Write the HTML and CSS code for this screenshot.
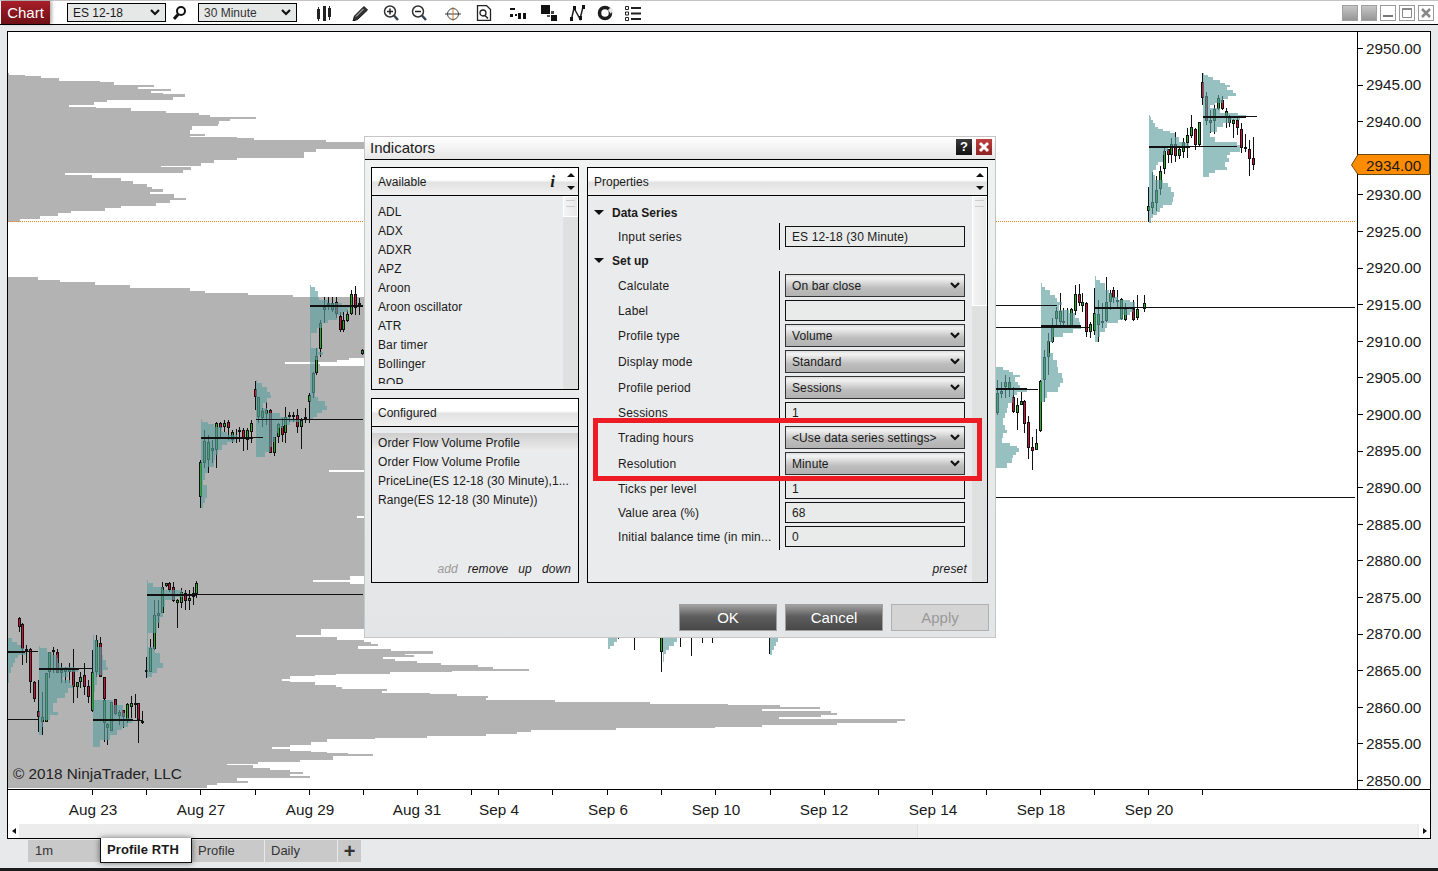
FILE: index.html
```html
<!DOCTYPE html>
<html lang="en">
<head>
  <meta charset="UTF-8" />
  <title>Chart - ES 12-18</title>
  <link rel="stylesheet" href="styles.css">
</head>
<body>
  <div class="window">

    <div class="toolbar">
      <div class="chart-btn">Chart</div>
      <div class="tool-select sel-instrument">ES 12-18 <svg class="chev" viewBox="0 0 10 7"><path d="M1 1l4 4 4-4"/></svg></div>
      <svg class="tool gap7" viewBox="0 0 16 16"><circle cx="8" cy="6" r="4" fill="none" stroke="#111" stroke-width="2"/><path d="M5 9.500L1 14" stroke="#111" stroke-width="3"/></svg>
      <div class="tool-select sel-period">30 Minute <svg class="chev" viewBox="0 0 10 7"><path d="M1 1l4 4 4-4"/></svg></div>
      <svg class="tool gap19" viewBox="0 0 16 16"><path d="M1 4h3v10H1zM7 1h3v15H7zM12 3h3v9h-3z" fill="#222"/><path d="M2.500 2v14M13.500 1v14" stroke="#222"/></svg>
      <svg class="tool gap20" viewBox="0 0 16 16"><path d="M1 16l1.500-5L12 1.500l3.500 3.500L5.500 14.500z" fill="#333" stroke="#111"/><path d="M4 11.500l7.500-7.500" stroke="#ddd"/></svg>
      <svg class="tool gap15" viewBox="0 0 16 16"><circle cx="7" cy="6.500" r="5.500" fill="#fff" stroke="#333" stroke-width="1.500"/><path d="M4 6.500h6M7 3.500v6" stroke="#222" stroke-width="1.500"/><path d="M11 10.500l4 4.500" stroke="#345" stroke-width="2.500"/></svg>
      <svg class="tool gap12" viewBox="0 0 16 16"><circle cx="7" cy="6.500" r="5.500" fill="#fff" stroke="#333" stroke-width="1.500"/><path d="M4 6.500h6" stroke="#222" stroke-width="1.500"/><path d="M11 10.500l4 4.500" stroke="#345" stroke-width="2.500"/></svg>
      <svg class="tool gap18" viewBox="0 0 16 16"><circle cx="8" cy="9" r="5.500" fill="none" stroke="#444"/><path d="M0 9h16" stroke="#333"/><path d="M8 2v14" stroke="#c97f2a"/></svg>
      <svg class="tool gap15" viewBox="0 0 16 16"><path d="M1.500.5h9l4 4v11h-13z" fill="#fff" stroke="#222" stroke-width="1.300"/><circle cx="7" cy="8" r="3" fill="none" stroke="#222" stroke-width="1.300"/><path d="M9 10.500l3 3" stroke="#222" stroke-width="1.500"/></svg>
      <svg class="tool gap18" viewBox="0 0 16 16"><path d="M0 3h5v2H0zM0 9h3v3H0zM8 8h3v6H8zM13 8h3v6h-3zM5 9h2v2H5z" fill="#111"/></svg>
      <svg class="tool gap15" viewBox="0 0 16 16"><path d="M0 0h9v9H0z" fill="#111"/><path d="M10 6h3v3h-3z" fill="#444"/><path d="M10 10h6v6h-6z" fill="#111"/><path d="M6 10h3v2H6z" fill="#555"/></svg>
      <svg class="tool gap12" viewBox="0 0 16 16"><path d="M2.500 14L5 3l6 11L14 2" fill="none" stroke="#222" stroke-width="1.500"/><path d="M1 12h3v4H1zM4 1h3v4H4zM10 11h3v4h-3zM13 0h3v4h-3z" fill="#111"/></svg>
      <svg class="tool gap12" viewBox="0 0 16 16"><circle cx="8" cy="8" r="5.500" fill="none" stroke="#1c1c1c" stroke-width="3.500"/><path d="M13 3l3 1-2 5-3-4z" fill="#e8e9ea"/></svg>
      <svg class="tool gap12" viewBox="0 0 16 16"><path d="M.5 1.500h3v3h-3zM.5 7h3v3h-3zM.5 12.500h3v3h-3z" fill="none" stroke="#222"/><path d="M6 2h10v2H6zM6 7.500h10v2H6zM6 13h10v2H6z" fill="#222"/></svg>
      <div class="win-btns">
        <div class="win-btn solid"></div>
        <div class="win-btn solid"></div>
        <div class="win-btn"><svg viewBox="0 0 14 14"><path d="M2 10h10" stroke="#777" stroke-width="2"/></svg></div>
        <div class="win-btn"><svg viewBox="0 0 14 14"><path d="M2.500 3.500h9v8h-9z" fill="none" stroke="#888"/><path d="M2 3h10" stroke="#888" stroke-width="2"/></svg></div>
        <div class="win-btn"><svg viewBox="0 0 14 14"><path d="M3 3l8 8M11 3l-8 8" stroke="#888" stroke-width="2.500"/></svg></div>
      </div>
    </div>

    <div class="chart-frame">
      <svg id="chart" class="chart-svg" viewBox="8 32 1422 792" width="1422" height="792"></svg>
      <div class="hscroll">
        <div class="hscroll-btn"><span class="tri-left"></span></div>
        <div class="hscroll-track"><div class="hscroll-thumb"></div></div>
        <div class="hscroll-btn"><span class="tri-right"></span></div>
      </div>
    </div>

    <div class="tabs">
      <div class="tab tab-1m">1m</div>
      <div class="tab tab-active">Profile RTH</div>
      <div class="tab tab-wide">Profile</div>
      <div class="tab tab-wide">Daily</div>
      <div class="tab tab-add">+</div>
    </div>
  </div>

  <div class="dialog">
    <div class="dialog-title">
      <span>Indicators</span>
      <div class="dialog-btns">
        <div class="help-btn">?</div>
        <div class="close-btn"><svg viewBox="0 0 12 12"><path d="M2 2l8 8M10 2l-8 8" stroke="#fff" stroke-width="3"/></svg></div>
      </div>
    </div>

    <div class="dialog-body">
      <div class="left-col">
        <div class="panel panel-available">
          <div class="panel-head">
            <span class="panel-title">Available</span>
            <span class="info-i">i</span>
            <div class="head-arrows"><span class="tri-up"></span><span class="tri-down"></span></div>
          </div>
          <div class="panel-body">
            <div class="list list-available">
              <div class="row">ADL</div>
              <div class="row">ADX</div>
              <div class="row">ADXR</div>
              <div class="row">APZ</div>
              <div class="row">Aroon</div>
              <div class="row">Aroon oscillator</div>
              <div class="row">ATR</div>
              <div class="row">Bar timer</div>
              <div class="row">Bollinger</div>
              <div class="row">BOP</div>
            </div>
            <div class="vscroll"><div class="thumb thumb-small"></div></div>
          </div>
        </div>

        <div class="panel panel-configured">
          <div class="panel-head">
            <span class="panel-title">Configured</span>
          </div>
          <div class="list list-configured">
            <div class="row selected">Order Flow Volume Profile</div>
            <div class="row">Order Flow Volume Profile</div>
            <div class="row">PriceLine(ES 12-18 (30 Minute),1...</div>
            <div class="row">Range(ES 12-18 (30 Minute))</div>
          </div>
          <div class="links">
            <span class="off">add</span><span>remove</span><span>up</span><span>down</span>
          </div>
        </div>
      </div>

      <div class="panel panel-props">
        <div class="panel-head">
          <span class="panel-title">Properties</span>
          <div class="head-arrows"><span class="tri-up"></span><span class="tri-down"></span></div>
        </div>
        <div class="panel-body">
          <div class="props">
            <div class="section"><span class="tri-section"></span>Data Series</div>
            <div class="prop-group group-series">
              <div class="prop"><div class="prop-label">Input series</div><div class="prop-value"><div class="field input">ES 12-18 (30 Minute)</div></div></div>
            </div>
            <div class="section"><span class="tri-section"></span>Set up</div>
            <div class="prop-group">
              <div class="prop"><div class="prop-label">Calculate</div><div class="prop-value"><div class="field select">On bar close<svg class="chev" viewBox="0 0 10 7"><path d="M1 1l4 4 4-4"/></svg></div></div></div>
              <div class="prop"><div class="prop-label">Label</div><div class="prop-value"><div class="field input"></div></div></div>
              <div class="prop"><div class="prop-label">Profile type</div><div class="prop-value"><div class="field select">Volume<svg class="chev" viewBox="0 0 10 7"><path d="M1 1l4 4 4-4"/></svg></div></div></div>
              <div class="prop"><div class="prop-label">Display mode</div><div class="prop-value"><div class="field select">Standard<svg class="chev" viewBox="0 0 10 7"><path d="M1 1l4 4 4-4"/></svg></div></div></div>
              <div class="prop"><div class="prop-label">Profile period</div><div class="prop-value"><div class="field select">Sessions<svg class="chev" viewBox="0 0 10 7"><path d="M1 1l4 4 4-4"/></svg></div></div></div>
              <div class="prop"><div class="prop-label">Sessions</div><div class="prop-value"><div class="field input">1</div></div></div>
              <div class="prop"><div class="prop-label">Trading hours</div><div class="prop-value"><div class="field select">&lt;Use data series settings&gt;<svg class="chev" viewBox="0 0 10 7"><path d="M1 1l4 4 4-4"/></svg></div></div></div>
              <div class="prop"><div class="prop-label">Resolution</div><div class="prop-value"><div class="field select">Minute<svg class="chev" viewBox="0 0 10 7"><path d="M1 1l4 4 4-4"/></svg></div></div></div>
              <div class="prop"><div class="prop-label">Ticks per level</div><div class="prop-value"><div class="field input">1</div></div></div>
              <div class="prop"><div class="prop-label">Value area (%)</div><div class="prop-value"><div class="field input">68</div></div></div>
              <div class="prop"><div class="prop-label">Initial balance time (in min...</div><div class="prop-value"><div class="field input">0</div></div></div>
            </div>
            <div class="preset">preset</div>
          </div>
          <div class="vscroll"><div class="thumb thumb-long"></div></div>
        </div>
      </div>
    </div>

    <div class="dialog-foot">
      <button class="btn">OK</button>
      <button class="btn">Cancel</button>
      <button class="btn btn-off">Apply</button>
    </div>

    <div class="highlight"></div>
  </div>

  <script src="chart.js"></script>
</body>
</html>
```

FILE: styles.css
```css
* {
  box-sizing: border-box;
}
body {
  margin: 0;
  font-family: "Liberation Sans", Arial, sans-serif;
  font-size: 12px;
  color: #1a1a1a;
  background: #e8e9ea;
  overflow: hidden;
}
.window {
  position: relative;
  height: 871px;
  display: flex;
  flex-direction: column;
  border-top: 1px solid #c4c4c4;
  border-bottom: 3px solid #1c1c1c;
  background: #e8e9ea;
}

/* toolbar */
.toolbar {
  height: 24px;
  flex: none;
  display: flex;
  align-items: center;
  padding-right: 4px;
  border-bottom: 1px solid #000;
  background: #fff;
}
.chart-btn {
  width: 49px;
  height: 23px;
  margin-left: 1px;
  line-height: 23px;
  text-align: center;
  font-size: 15px;
  color: #fff;
  background: linear-gradient(#a81e28, #6e1016);
  box-shadow: 2px 0 3px rgba(0,0,0,0.3);
}
.tool-select {
  height: 19px;
  display: flex;
  align-items: center;
  justify-content: space-between;
  padding: 0 5px;
  border: 1px solid #000;
  background: #e6e7e7;
  font-size: 12px;
}
.sel-instrument {
  width: 99px;
  margin-left: 17px;
}
.sel-period {
  width: 99px;
  margin-left: 9px;
  color: #333;
}
.chev {
  width: 10px;
  height: 7px;
  flex: none;
}
.chev path {
  fill: none;
  stroke: #111;
  stroke-width: 2.2;
}
.tool {
  width: 16px;
  height: 16px;
  flex: none;
}
.gap7 { margin-left: 7px; }
.gap12 { margin-left: 12px; }
.gap15 { margin-left: 15px; }
.gap18 { margin-left: 18px; }
.gap19 { margin-left: 19px; }
.gap20 { margin-left: 20px; }
.win-btns {
  margin-left: auto;
  display: flex;
  gap: 3px;
}
.win-btn {
  width: 16px;
  height: 16px;
  border: 1px solid #9a9a9a;
  background: #fff;
}
.win-btn svg {
  display: block;
  width: 14px;
  height: 14px;
}
.win-btn.solid {
  border-color: #a0a0a0;
  background: linear-gradient(#c6c6c6, #959595);
}

/* chart */
.chart-frame {
  flex: none;
  height: 808px;
  margin: 6px 7px 0 7px;
  width: 1424px;
  border: 1px solid #000;
  background: #fff;
  display: flex;
  flex-direction: column;
}
.chart-svg {
  display: block;
  flex: none;
  shape-rendering: crispEdges;
  background: #fff;
}
.price-label {
  font-size: 15.3px;
  fill: #1a1a1a;
}
.time-label {
  font-size: 15.3px;
  fill: #1a1a1a;
  text-anchor: middle;
}
.copyright {
  font-size: 15.3px;
  fill: #222;
}
.hscroll {
  flex: 1;
  display: flex;
  background: #ececec;
}
.hscroll-btn {
  width: 11px;
  display: flex;
  align-items: center;
  justify-content: center;
  background: #fff;
}
.hscroll-track {
  flex: 1;
}
.hscroll-thumb {
  width: 500px;
  height: 100%;
  margin-left: 898px;
  background: #f1f1f1;
  border-left: 1px solid #e0e0e0;
}
.tri-left {
  border: 3.5px solid transparent;
  border-left-width: 0;
  border-right: 4px solid #111;
}
.tri-right {
  border: 3.5px solid transparent;
  border-right-width: 0;
  border-left: 4px solid #111;
}

/* tabs */
.tabs {
  display: flex;
  margin: 0 0 0 28px;
  height: 22px;
  font-size: 13px;
  color: #333;
}
.tab {
  height: 22px;
  line-height: 22px;
  padding-left: 7px;
  background: #c9c9c9;
  margin-top: 1px;
}
.tab-1m {
  width: 72px;
}
.tab-wide {
  width: 72px;
  margin-right: 1px;
  padding-left: 6px;
}
.tab-active {
  position: relative;
  width: 92px;
  height: 25px;
  margin-top: -1px;
  padding-left: 6px;
  line-height: 24px;
  font-weight: bold;
  letter-spacing: 0.1px;
  color: #1a1a1a;
  background: #fff;
  border: 1px solid #111;
  border-top: 0;
  box-shadow: 0 0 6px rgba(0,0,0,0.55);
}
.tab-add {
  width: 23px;
  padding: 0;
  text-align: center;
  font-size: 20px;
  font-weight: bold;
}

/* indicators dialog */
.dialog {
  position: absolute;
  left: 364px;
  top: 136px;
  width: 632px;
  height: 502px;
  display: flex;
  flex-direction: column;
  background: linear-gradient(#f1f2f2, #e4e5e6);
  border: 1px solid #c6c6c6;
}
.dialog-title {
  height: 23px;
  flex: none;
  display: flex;
  align-items: center;
  justify-content: space-between;
  padding: 0 3px 2px 5px;
  border-bottom: 1px solid #000;
  background: linear-gradient(#fff, #e6e6e6);
  font-size: 15px;
}
.dialog-btns {
  display: flex;
  gap: 4px;
}
.help-btn {
  width: 16px;
  height: 16px;
  line-height: 16px;
  text-align: center;
  font-size: 13px;
  font-weight: bold;
  color: #fff;
  background: linear-gradient(#3a3a3a, #111);
}
.close-btn {
  width: 16px;
  height: 16px;
  padding: 2px;
  background: linear-gradient(#c04040, #8e2222);
}
.close-btn svg {
  display: block;
  width: 12px;
  height: 12px;
}
.dialog-body {
  display: flex;
  gap: 8px;
  height: 416px;
  margin: 7px 0 0 6px;
}
.left-col {
  width: 208px;
  display: flex;
  flex-direction: column;
  gap: 8px;
}
.panel {
  display: flex;
  flex-direction: column;
  border: 1px solid #000;
  background: #eaebec;
}
.panel-available {
  height: 223px;
}
.panel-configured {
  flex: 1;
}
.panel-props {
  width: 401px;
}
.panel-head {
  height: 28px;
  flex: none;
  display: flex;
  align-items: center;
  padding-left: 6px;
  border-bottom: 1px solid #000;
  background: linear-gradient(#fff 44%, #e2e2e2 54%, #f1f1f1 100%);
}
.panel-title {
  flex: 1;
  padding-top: 1px;
}
.info-i {
  font-family: "Liberation Serif", serif;
  font-size: 17px;
  font-style: italic;
  font-weight: bold;
  margin-right: 8px;
}
.head-arrows {
  width: 15px;
  height: 100%;
  flex: none;
  display: flex;
  flex-direction: column;
  align-items: center;
  justify-content: space-between;
  padding: 5px 0 5px;
}
.tri-up {
  border: 4px solid transparent;
  border-top-width: 0;
  border-bottom: 4px solid #111;
}
.tri-down {
  border: 4px solid transparent;
  border-bottom-width: 0;
  border-top: 4px solid #111;
}
.panel-body {
  flex: 1;
  min-height: 0;
  display: flex;
  overflow: hidden;
}
.list {
  flex: 1;
  padding: 7px 0 0 6px;
  overflow: hidden;
}
.list-available {
  margin-bottom: 5px;
}
.row {
  height: 19px;
  line-height: 19px;
  letter-spacing: 0.1px;
  white-space: nowrap;
}
.list-configured {
  flex: 1;
  padding: 6px 0 0;
}
.list-configured .row {
  padding-left: 6px;
  line-height: 21px;
  letter-spacing: 0.08px;
}
.row.selected {
  background: linear-gradient(#cfcfcf, #eeeeee);
}
.links {
  display: flex;
  justify-content: flex-end;
  gap: 10px;
  padding: 0 7px 6px 0;
  font-style: italic;
  letter-spacing: 0.1px;
}
.links .off {
  color: #9a9a9a;
}
.vscroll {
  width: 15px;
  flex: none;
  background: #dfe0e0;
}
.thumb {
  background: linear-gradient(90deg, #f4f4f4, #e8e8e8);
  border: 1px solid #fff;
  position: relative;
}
.thumb-small {
  height: 21px;
}
.thumb-long {
  height: 110px;
}
.thumb::before {
  content: "";
  display: block;
  height: 5px;
  margin: 3px 2px 0;
  border-top: 1px solid #ccc;
  border-bottom: 1px solid #ccc;
}

/* properties */
.props {
  flex: 1;
  display: flex;
  flex-direction: column;
  padding-top: 6px;
}
.section {
  height: 21px;
  display: flex;
  align-items: center;
  padding-left: 6px;
  font-weight: bold;
}
.tri-section {
  border: 5px solid transparent;
  border-bottom-width: 0;
  border-top: 5px solid #111;
  margin-right: 8px;
}
.prop {
  display: flex;
}
.prop-label {
  width: 191px;
  flex: none;
  padding-left: 30px;
  padding-top: 5px;
  white-space: nowrap;
  letter-spacing: 0.15px;
}
.prop:has(.input) .prop-label {
  padding-top: 4px;
}
.prop-value {
  padding: 0 0 3px 5px;
  border-left: 1px solid #000;
}
.prop:first-child .prop-label {
  padding-top: 8px;
}
.group-series .prop:first-child .prop-label {
  padding-top: 7px;
}
.prop:first-child .prop-value {
  padding-top: 3px;
}
.field {
  width: 180px;
  display: flex;
  align-items: center;
  justify-content: space-between;
  padding: 0 4px 0 6px;
  letter-spacing: 0.1px;
}
.input {
  height: 21px;
  border: 1px solid #111;
  background: #e9eaea;
}
.select {
  height: 23px;
  border: 1px solid #333;
  background: linear-gradient(#dcdcdc, #f3f3f3 14%, #bdbdbd 62%, #b2b2b2);
}
.preset {
  margin-top: auto;
  padding: 0 5px 6px 0;
  text-align: right;
  font-style: italic;
  letter-spacing: 0.2px;
}

/* buttons */
.dialog-foot {
  display: flex;
  justify-content: flex-end;
  gap: 8px;
  margin-top: 21px;
  margin-right: 6px;
}
.btn {
  width: 98px;
  height: 27px;
  padding: 0;
  border: 1px solid #a0a0a0;
  font-family: "Liberation Sans", Arial, sans-serif;
  font-size: 15px;
  color: #fff;
  background: linear-gradient(#a2a2a2, #5e5e5e 45%, #484848);
}
.btn-off {
  color: #999;
  border-color: #b0b0b0;
  background: #d4d4d4;
}
.highlight {
  position: absolute;
  left: 228px;
  top: 281px;
  width: 389px;
  height: 63px;
  border: 5px solid #ed1c24;
}
```

FILE: chart.js
```js
const svg = document.getElementById("chart");
const NS = "http://www.w3.org/2000/svg";

function add(tag, attrs, text) {
  const el = document.createElementNS(NS, tag);
  for (const k in attrs) el.setAttribute(k, attrs[k]);
  if (text) el.textContent = text;
  svg.appendChild(el);
  return el;
}

// staircase shape: rows are [y, right edge], last row closes it
function steps(x0, rows, fill, opacity) {
  let d = `M${x0} ${rows[0][0]}`;
  for (let i = 0; i < rows.length - 1; i++) {
    d += `H${rows[i][1]}V${rows[i + 1][0]}`;
  }
  d += `H${x0}Z`;
  add("path", { d, fill, "fill-opacity": opacity || 1 });
}

function line(x1, x2, y, w) {
  add("rect", { x: x1, y: Math.round(y - w / 2), width: x2 - x1, height: w, fill: "#111" });
}

// the big grey session profiles
const upperProfile = [[73,9],[75,25],[76,41],[78,59],[81,100],[82,114],[85,154],[87,138],[89,171],[91,151],[93,163],[94,185],[97,173],[100,107],[102,94],[105,69],[107,96],[108,131],[111,166],[113,199],[115,210],[117,256],[119,230],[121,219],[124,218],[126,192],[130,190],[134,205],[136,190],[137,237],[138,254],[140,326],[142,400],[149,316],[152,304],[158,237],[160,214],[163,201],[166,161],[167,191],[170,183],[173,65],[175,92],[178,121],[181,133],[184,147],[187,152],[189,163],[192,150],[194,174],[198,186],[200,170],[203,156],[206,121],[208,105],[211,71],[213,58],[216,40],[219,20],[222,8]];
steps(8, upperProfile, "#b3b3b3");

const mainProfile = [[277,38],[280,60],[282,95],[285,130],[288,190],[291,205],[293,248],[295,293],[297,600],[358,349],[360,337],[362,285],[364,320],[366,600],[470,329],[472,600],[516,357],[518,600],[576,350],[580,313],[582,350],[584,600],[629,321],[635,296],[637,337],[640,364],[642,371],[644,378],[646,358],[649,391],[651,433],[654,405],[655,414],[657,383],[659,395],[661,417],[663,441],[665,478],[667,493],[669,529],[671,452],[672,390],[674,336],[675,315],[676,290],[679,282],[681,290],[682,315],[685,336],[687,342],[689,387],[691,382],[693,430],[694,457],[696,488],[698,486],[700,555],[702,650],[704,728],[705,780],[707,820],[709,762],[711,831],[713,837],[715,821],[717,779],[719,905],[721,897],[723,837],[725,762],[727,715],[728,616],[730,531],[732,517],[734,486],[736,427],[738,375],[739,327],[742,311],[745,290],[747,272],[749,290],[751,311],[752,327],[753,348],[754,373],[756,333],[760,300],[762,258],[764,227],[765,253],[768,270],[770,290],[772,303],[774,290],[776,310],[778,237],[781,248],[783,217],[785,207],[788,8]];
steps(8, mainProfile, "#b3b3b3");

// pre-market dotted line
add("path", { d: "M8 221.500H1355", stroke: "#e8892b", "stroke-dasharray": "1 1", fill: "none" });

// clusters were measured at 3x, so coords get divided on the way in
const clusters = [
  { ox: 1130, oy: 60,
    candles: [
      "g 55 380 485 438 452","g 67 336 462 427 445","g 79 348 452 390 428","g 91 318 405 333 387","g 103 265 342 273 328",
      "r 115 268 308 268 285","g 124 235 310 252 285","r 136 216 305 252 287","g 148 262 296 267 287","g 160 235 295 247 275",
      "g 172 205 293 226 248","g 184 165 235 201 227","r 196 203 270 207 255","g 208 186 257 187 255","r 217 38 135 67 115",
      "r 229 95 195 108 182","g 241 150 218 180 188","g 253 135 222 147 182","g 265 105 150 115 148","r 277 108 150 121 148",
      "g 289 145 205 153 175","g 298 165 200 175 188","g 310 178 235 180 193","r 322 170 225 181 204","r 334 190 280 208 263",
      "g 346 222 275 262 264","r 358 240 348 268 296","r 370 232 330 295 314"
    ],
    profiles: [
      [57, [[165,60],[170,63],[180,70],[190,75],[200,85],[207,100],[212,120],[220,135],[232,148],[245,165],[250,178],[258,165],[265,115],[272,105],[285,100],[295,98],[305,85],[315,78],[330,68],[345,75],[360,100],[370,115],[380,122],[395,132],[410,130],[425,125],[435,100],[445,90],[455,80],[465,70],[475,62],[488,57]]],
      [219, [[38,222],[45,235],[52,250],[60,270],[70,285],[75,300],[82,290],[90,308],[100,318],[108,295],[118,280],[128,255],[135,240],[145,270],[158,325],[165,348],[172,330],[180,300],[190,280],[200,260],[215,240],[230,255],[245,320],[255,330],[265,330],[275,300],[285,290],[295,298],[305,285],[320,290],[330,255],[340,238],[350,219]]]
    ],
    lines: [[57,180,260,2],[180,320,260,1],[219,348,170,2],[348,380,170,1]]
  },
  { ox: 990, oy: 270,
    candles: [
      "g 22 330 435 370 430","g 34 335 385 362 372","g 46 315 385 337 352","g 58 322 380 337 360","r 70 350 430 380 425",
      "g 82 385 480 405 430","g 94 365 405 392 405","r 103 390 490 392 463","r 115 438 568 457 535","r 127 500 600 530 542",
      "g 139 478 540 518 540","g 151 330 485 332 482","g 163 240 395 260 330","g 175 190 315 212 260","g 187 145 220 170 215",
      "g 197 110 170 122 147","g 209 70 165 122 155","g 220 115 175 152 160","g 232 115 175 165 172","g 244 115 175 118 172",
      "g 256 45 135 73 122","r 268 42 108 73 100","g 277 70 125 95 107","r 289 95 200 100 187","g 301 155 205 162 185",
      "g 313 55 195 128 184","g 325 90 215 133 165","g 337 100 175 153 160","g 349 20 155 95 153","g 361 60 120 68 95",
      "r 370 50 100 60 85","g 382 60 110 90 95","g 394 85 150 88 147","g 406 100 152 118 150","r 430 90 152 118 150",
      "g 442 75 150 118 145","g 463 75 125 100 118"
    ],
    profiles: [
      [18, [[275,18],[290,40],[300,58],[305,70],[315,90],[322,75],[335,85],[345,90],[355,112],[365,80],[375,70],[390,68],[400,55],[415,50],[430,45],[445,40],[465,45],[480,50],[490,40],[505,35],[520,60],[528,80],[535,87],[545,78],[555,70],[565,65],[580,50],[595,18]]],
      [153, [[40,156],[50,165],[60,180],[75,195],[85,200],[95,215],[105,207],[120,238],[130,255],[145,268],[155,270],[165,272],[178,250],[190,220],[200,190],[215,178],[235,178],[250,190],[270,200],[290,205],[310,215],[325,218],[340,210],[350,205],[365,170],[385,165],[395,153]]],
      [315, [[18,318],[30,330],[40,345],[60,358],[70,365],[80,385],[90,420],[95,435],[105,435],[115,430],[125,420],[135,400],[150,385],[160,350],[175,345],[185,330],[200,325],[215,315]]]
    ],
    lines: [[18,110,358,2],[110,145,358,1],[153,272,168,2],[18,300,172,1],[18,200,106,1],[315,435,113,2],[435,1095,113,1]]
  },
  { ox: 190, oy: 280,
    candles: [
      "g 31 540 685 545 650","g 43 450 565 483 550","g 55 465 578 485 540","g 67 480 550 503 512","g 79 425 565 428 510",
      "r 91 425 470 428 445","g 103 420 455 428 440","r 113 420 480 426 445","g 125 450 490 455 480","g 137 448 490 470 473",
      "r 148 440 485 450 453","r 160 445 512 450 478","g 172 445 510 450 480","g 184 420 488 428 455",
      "r 196 302 390 327 352","g 205 350 430 352 412","g 217 385 440 393 414","g 229 365 435 389 402","r 241 388 520 390 518",
      "g 253 470 527 472 518","g 265 430 490 433 472","r 277 415 485 438 466","g 286 380 490 410 460","g 298 395 425 405 410",
      "g 310 395 425 405 408","r 322 388 460 405 440","g 334 415 507 420 440","g 346 385 430 412 418","g 358 340 430 345 365",
      "g 370 275 355 280 338","g 379 205 285 228 278","g 391 120 230 128 208","g 403 50 130 80 90","g 415 50 90 70 75",
      "g 427 50 95 70 90","r 439 50 115 65 103","r 451 95 155 108 150","g 460 95 155 120 150","g 472 90 125 103 122",
      "g 484 30 105 42 103","r 496 18 105 42 85","g 508 55 105 70 75","g 517 207 225 210 222"
    ],
    profiles: [
      [33, [[418,36],[425,55],[432,72],[440,95],[455,110],[465,140],[475,135],[485,110],[495,95],[510,85],[525,75],[540,72],[560,55],[580,45],[600,40],[615,52],[640,52],[655,45],[670,38],[685,33]]],
      [198, [[300,200],[310,215],[320,230],[335,240],[345,243],[355,230],[370,220],[385,230],[400,270],[410,300],[418,330],[425,300],[435,280],[445,265],[460,262],[470,255],[485,245],[500,240],[515,225],[530,198]]],
      [360, [[15,363],[22,375],[32,385],[52,388],[60,415],[68,455],[75,480],[85,475],[95,460],[105,440],[120,415],[130,395],[145,380],[160,362],[190,362],[205,385],[215,400],[225,385],[240,375],[340,375],[350,385],[362,405],[378,410],[390,395],[400,380],[410,370],[420,360]]]
    ],
    lines: [[33,190,473,2],[190,218,473,1],[198,520,418,1],[360,520,77,2]]
  },
  { ox: 0, oy: 560,
    candles: [
      "r 58 170 215 175 200","r 67 190 315 193 268","g 79 255 310 268 270","r 91 265 400 268 365","r 103 362 425 365 418",
      "r 115 360 515 452 472","g 127 395 525 472 485","g 139 340 485 340 485","g 148 275 355 275 335","r 160 260 340 270 273",
      "r 172 268 340 275 340","g 184 310 370 330 340","g 196 320 370 325 335","g 208 310 370 325 335","r 220 268 430 330 380",
      "g 232 365 413 365 380","g 241 335 385 352 365","r 253 310 405 345 380","r 265 360 430 378 412","g 277 270 455 335 452",
      "g 289 225 350 240 335","r 301 230 352 250 350","r 313 350 445 352 418","g 313 420 545 420 490","g 322 490 555 492 505",
      "g 334 425 512 425 512","r 346 418 465 418 462","g 358 450 495 457 467","r 370 450 505 450 470","g 382 430 490 433 480",
      "g 394 408 475 430 440","r 406 402 475 430 433","r 415 430 550 430 480","r 427 452 492 484 490",
      "g 439 290 355 330 333","g 451 238 335 265 335","g 463 120 270 165 267","g 475 120 205 160 168","g 487 65 160 80 160",
      "g 499 68 80 70 78","r 508 65 95 70 90","r 520 65 125 82 122","g 532 118 205 120 128","g 544 85 145 95 128",
      "r 556 90 150 100 122","g 568 90 150 115 122","g 580 80 135 100 110","g 589 62 115 70 102"
    ],
    profiles: [
      [23, [[235,35],[245,50],[255,62],[265,72],[275,78],[285,55],[295,45],[310,40],[320,32],[340,28],[370,23]]],
      [117, [[258,120],[265,140],[275,155],[285,170],[295,175],[310,180],[320,225],[326,235],[335,205],[350,190],[360,210],[375,220],[385,205],[400,195],[415,170],[430,160],[455,175],[465,150],[480,130],[500,125],[525,117]]],
      [279, [[225,282],[240,290],[260,305],[285,310],[300,318],[320,325],[330,310],[345,290],[375,285],[395,282],[420,340],[435,370],[445,370],[460,375],[475,395],[490,385],[500,365],[510,350],[525,330],[540,300],[560,279]]],
      [441, [[60,443],[70,460],[80,490],[90,545],[100,548],[110,525],[120,495],[140,490],[170,480],[190,470],[220,445],[245,443],[260,465],[280,480],[310,488],[325,470],[340,455],[350,441]]]
    ],
    lines: [[23,75,275,2],[75,115,275,1],[23,115,478,1],[117,237,326,2],[237,280,326,1],[279,398,480,2],[398,430,480,1],[441,590,104,2],[590,1090,104,1]]
  },
  // what still shows under the dialog
  { ox: 600, oy: 630,
    candles: [
      "g 54 0 27 0 5","g 102 0 60 0 5","g 183 0 126 0 65","r 240 0 51 0 9","g 273 0 78 0 5","g 306 0 39 0 3","g 336 0 39 0 3","g 507 0 72 0 5"
    ],
    profiles: [
      [24, [[24,51],[36,42],[48,30],[57,24]]],
      [189, [[24,231],[36,222],[48,207],[60,198],[72,192],[84,192],[96,189]]],
      [510, [[24,534],[36,528],[48,522],[60,516],[75,510]]]
    ],
    lines: []
  }
];

const colors = { g: "#22b022", r: "#d0103a" };

function drawCandle(ox, oy, row) {
  const [c, zx, hi, lo, bt, bb] = row.split(" ").map((v, i) => (i ? +v : v));
  const x = Math.round(ox + zx / 3);
  const y = (v) => Math.round(oy + v / 3);
  add("rect", { x, y: y(hi), width: 1, height: y(lo) - y(hi), fill: "#111" });
  const h = Math.max(y(bb) - y(bt), 2);
  add("rect", { x: x - 1, y: y(bt), width: 3, height: h, fill: "#111" });
  if (h > 2) add("rect", { x, y: y(bt) + 1, width: 1, height: h - 2, fill: colors[c] });
}

clusters.forEach((c) => {
  c.candles.forEach((row) => drawCandle(c.ox, c.oy, row));
  c.profiles.forEach((p) => {
    const rows = p[1].map((r) => [c.oy + r[0] / 3, c.ox + r[1] / 3]);
    steps(c.ox + p[0] / 3, rows, "#5f9ea0", 0.65);
  });
  c.lines.forEach((l) => line(c.ox + l[0] / 3, c.ox + l[1] / 3, c.oy + l[2] / 3, l[3]));
});

line(996, 1355, 497.5, 1);

add("text", { x: 13, y: 779, class: "copyright" }, "\u00a9 2018 NinjaTrader, LLC");

// price axis
add("rect", { x: 1357, y: 32, width: 73, height: 757, fill: "#fff" });
add("rect", { x: 1357, y: 32, width: 1, height: 757, fill: "#000" });
for (let p = 2950; p >= 2850; p -= 5) {
  const y = 48 + (2950 - p) * 7.32;
  add("rect", { x: 1358, y: Math.round(y), width: 5, height: 1, fill: "#000" });
  add("text", { x: 1366, y: y + 5.8, class: "price-label" }, p.toFixed(2));
}
add("path", { d: "M1351.500 165L1358 154.500H1429.500V174.500H1358Z", fill: "#ff8c00", stroke: "#6b4a10", "shape-rendering": "auto" });
add("text", { x: 1366, y: 171, class: "price-label" }, "2934.00");

// time axis
add("rect", { x: 8, y: 789, width: 1422, height: 1, fill: "#000" });
const ticks = [92,146,200,255,309,363,417,471,498,552,607,661,715,770,824,878,932,986,1040,1094,1148,1202];
ticks.forEach((x) => add("rect", { x, y: 790, width: 1, height: 5, fill: "#000" }));
const dates = [[93,"Aug 23"],[201,"Aug 27"],[310,"Aug 29"],[417,"Aug 31"],[499,"Sep 4"],[608,"Sep 6"],[716,"Sep 10"],[824,"Sep 12"],[933,"Sep 14"],[1041,"Sep 18"],[1149,"Sep 20"]];
dates.forEach((d) => add("text", { x: d[0], y: 815, class: "time-label" }, d[1]));
```
